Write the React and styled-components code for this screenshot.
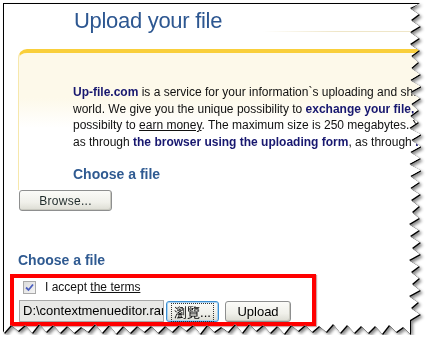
import React from "react";
import styled, { createGlobalStyle } from "styled-components";

const W = 418;
const H = 332;

// torn right and bottom edges, deterministic jitter
const jitter = (i, k) => (Math.sin(i * 12.9898 + k * 78.233) * 43758.5453) % 1;

const rightEdge = [];
for (let i = 0, y = 0; y < H - 8; i++, y += 6) {
  const base = i % 2 ? W - 11 : W - 2;
  rightEdge.push([base + Math.round(Math.abs(jitter(i, 1)) * 3), y]);
}
const bottomEdge = [];
for (let i = 0, x = W - 10; x > 0; i++, x -= 7) {
  const base = i % 2 ? H - 9 : H - 2;
  bottomEdge.push([x, base + Math.round(Math.abs(jitter(i, 2)) * 3) - 1]);
}
bottomEdge.push([0, H - 4]);

const toPolygon = (pts, d) =>
  "polygon(0 0, " +
  pts.map(([x, y]) => `${Math.max(0, x - d)}px ${Math.max(0, y - d)}px`).join(", ") +
  ")";

const outerClip = toPolygon([...rightEdge, ...bottomEdge], 0);
const innerClip = toPolygon([...rightEdge, ...bottomEdge], 2);

const GlobalStyle = createGlobalStyle`
  body {
    margin: 0;
    background: #fff;
    font-family: "Liberation Sans", Arial, sans-serif;
  }
`;

const Shadow = styled.div`
  width: ${W}px;
  margin: 3px 0 0 3px;
  filter: drop-shadow(2px 2px 1.5px rgba(0, 0, 0, 0.45));
`;

const Edge = styled.div`
  width: ${W}px;
  height: ${H}px;
  box-sizing: border-box;
  padding: 1px 0 0 1px;
  background: #000;
  clip-path: ${outerClip};
`;

const Paper = styled.div`
  width: ${W - 1}px;
  height: ${H - 1}px;
  background: #fff;
  overflow: hidden;
  clip-path: ${innerClip};
  display: flex;
  flex-direction: column;
  align-items: flex-start;
`;

const TitleRow = styled.div`
  align-self: stretch;
  margin-top: 4px;
  height: 26px;
  padding-left: 70px;
  background: linear-gradient(to right, transparent 62%, #efe6c8 80%, #efe6c8)
    no-repeat 0 23px / 100% 1px;
`;

const Title = styled.h1`
  margin: 0;
  font-size: 22px;
  line-height: 26px;
  font-weight: normal;
  letter-spacing: -0.3px;
  color: #2d5791;
`;

const InfoBox = styled.div`
  margin: 15px 0 0 14px;
  width: 520px;
  border-top: 4px solid #f9cf3b;
  border-left: 1px solid #f7e8ac;
  border-top-left-radius: 9px;
  background: linear-gradient(#fdf9ea 0, #fdf9ea 45px, #fff 75px);
  padding: 31px 0 7px 54px;
`;

const Text = styled.p`
  margin: 0;
  font-size: 12px;
  line-height: 16.5px;
  color: #111;
  white-space: nowrap;
`;

const Strong = styled.b`
  color: #17176f;
`;

const Under = styled.span`
  text-decoration: underline;
`;

const SubTitle = styled.h2`
  margin: ${({ $top }) => $top}px 0 0 ${({ $left }) => $left}px;
  font-size: 14px;
  line-height: 17px;
  font-weight: bold;
  color: #2f5a91;
`;

const Button = styled.button`
  box-sizing: border-box;
  width: ${({ $w }) => $w}px;
  height: 21px;
  margin: 0;
  padding: 0;
  border: 1px solid #8e8f8f;
  border-radius: 3px;
  background: linear-gradient(#fbfbf8, #f0f0ea 60%, #dcdcd3);
  font-family: "Liberation Sans", "Noto Sans CJK TC", sans-serif;
  font-size: 12px;
  color: #1e2a2a;
  box-shadow: inset -1px -1px 0 #c9c9c0;
`;

const BrowseButton = styled(Button)`
  margin-left: 15px;
  letter-spacing: 0.3px;
`;

const FocusButton = styled(Button)`
  border: 1px solid #3d8fd1;
  box-shadow: inset 0 0 0 1px #a9d3f3;
  font-size: 13px;
  color: #000;
  span {
    outline: 1px dotted #333;
    outline-offset: 1px;
    padding: 0 1px;
  }
`;

const UploadButton = styled(Button)`
  margin-left: 6px;
  font-size: 13px;
  color: #000;
`;

const Highlight = styled.div`
  margin: 5px 0 0 6px;
  width: 306px;
  height: 52px;
  box-sizing: border-box;
  border: 4px solid #ff0000;
  box-shadow: 1px 1px 1px rgba(120, 0, 0, 0.35);
  padding: 2px 0 0 5px;
  display: flex;
  flex-direction: column;
  gap: 4px;
`;

const CheckRow = styled.label`
  display: flex;
  align-items: center;
  gap: 9px;
  padding-left: 4px;
  height: 14px;
  font-size: 12px;
  color: #111;
`;

const CheckBox = styled.span`
  width: 13px;
  height: 13px;
  box-sizing: border-box;
  border: 1px solid #a9a9a9;
  background: linear-gradient(135deg, #dcdcdc, #f4f4f4);
  display: flex;
  align-items: center;
  justify-content: center;
`;

const FileRow = styled.div`
  display: flex;
  align-items: center;
  margin-top: 2px;
`;

const FileField = styled.div`
  box-sizing: border-box;
  width: 145px;
  height: 22px;
  margin-right: 2px;
  padding: 0 0 0 3px;
  border: 1px solid #a8a8a8;
  background: #e8e8e6;
  font-size: 13px;
  line-height: 20px;
  color: #000;
  white-space: nowrap;
  overflow: hidden;
`;

export default function App() {
  return (
    <>
      <GlobalStyle />
      <Shadow>
        <Edge>
          <Paper>
            <TitleRow>
              <Title>Upload your file</Title>
            </TitleRow>
            <InfoBox>
              <Text>
                <Strong>Up-file.com</Strong> is a service for your information`s uploading and sharing all over the
              </Text>
              <Text>
                world. We give you the unique possibility to <Strong>exchange your file,</Strong> and also the
              </Text>
              <Text>
                possibilty to <Under>earn money</Under>. The maximum size is 250 megabytes. You can upload
              </Text>
              <Text>
                as through <Strong>the browser using the uploading form</Strong>, as through <Strong>ftp</Strong>
              </Text>
              <SubTitle $top={16} $left={0}>Choose a file</SubTitle>
            </InfoBox>
            <BrowseButton $w={93}>Browse...</BrowseButton>
            <SubTitle $top={41} $left={14}>Choose a file</SubTitle>
            <Highlight>
              <CheckRow>
                <CheckBox>
                  <svg width="9" height="9" viewBox="0 0 9 9">
                    <path d="M1 4.5 L3.5 7 L8 1.5" fill="none" stroke="#4b5fbf" strokeWidth="1.8" />
                  </svg>
                </CheckBox>
                <span>
                  I accept <Under>the terms</Under>
                </span>
              </CheckRow>
              <FileRow>
                <FileField>D:\contextmenueditor.rar</FileField>
                <FocusButton $w={53}>
                  <span>瀏覽...</span>
                </FocusButton>
                <UploadButton $w={66}>Upload</UploadButton>
              </FileRow>
            </Highlight>
          </Paper>
        </Edge>
      </Shadow>
    </>
  );
}
